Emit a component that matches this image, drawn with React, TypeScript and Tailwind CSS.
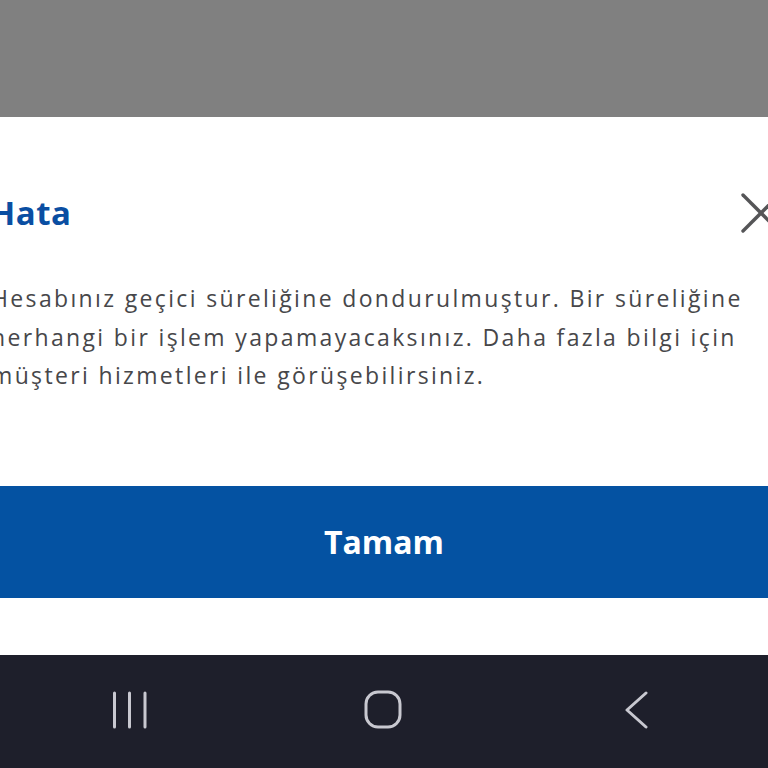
const lines = [
  "Hesabınız geçici süreliğine dondurulmuştur. Bir süreliğine",
  "herhangi bir işlem yapamayacaksınız. Daha fazla bilgi için",
  "müşteri hizmetleri ile görüşebilirsiniz.",
];

function CloseIcon() {
  return (
    <svg width="40" height="40" viewBox="0 0 40 40" fill="none" stroke="#555557" strokeWidth="3.4" strokeLinecap="round">
      <line x1="2" y1="2" x2="38" y2="38" />
      <line x1="38" y1="2" x2="2" y2="38" />
    </svg>
  );
}

function NavBar() {
  return (
    <nav className="grid h-[113px] grid-cols-3 items-center bg-[#1e1f2b] pb-[4px]">
      <div className="flex justify-center pl-[4px]">
        <svg width="36" height="38" viewBox="0 0 36 38" fill="none" stroke="#c8c8d0" strokeWidth="3" strokeLinecap="round">
          <line x1="2.5" y1="2" x2="2.5" y2="36" />
          <line x1="17.5" y1="2" x2="17.5" y2="36" />
          <line x1="33" y1="2" x2="33" y2="36" />
        </svg>
      </div>
      <div className="flex justify-center">
        <svg width="40" height="40" viewBox="0 0 40 40" fill="none" stroke="#c8c8d0" strokeWidth="3">
          <rect x="2" y="2" width="34" height="35" rx="12" />
        </svg>
      </div>
      <div className="flex justify-center pr-[6px]">
        <svg width="24" height="38" viewBox="0 0 24 38" fill="none" stroke="#c8c8d0" strokeWidth="3" strokeLinecap="round" strokeLinejoin="round">
          <polyline points="21,2 2,19 21,36" />
        </svg>
      </div>
    </nav>
  );
}

export default function App() {
  return (
    <div className="flex h-[768px] w-[768px] flex-col overflow-hidden bg-white font-['Open_Sans',sans-serif]">
      <div className="h-[117px] shrink-0 bg-[#808080]" />
      <section className="flex flex-1 flex-col bg-white pt-[76px]">
        <div className="-mr-[13px] -ml-[10px] flex items-center justify-between">
          <h2 className="text-[33px] leading-[40px] font-bold tracking-[0.5px] text-[#0a4ea2]">Hata</h2>
          <CloseIcon />
        </div>
        <p className="mt-[46px] -ml-[9px] text-[23px] leading-[38.6px] tracking-[2.35px] whitespace-nowrap text-[#47474a]">
          {lines.map((line) => (
            <span key={line} className="block">
              {line}
            </span>
          ))}
        </p>
        <button className="mt-[91px] flex h-[112px] w-full items-center justify-center bg-[#0452a2] text-[32px] font-bold text-white">
          Tamam
        </button>
      </section>
      <NavBar />
    </div>
  );
}
